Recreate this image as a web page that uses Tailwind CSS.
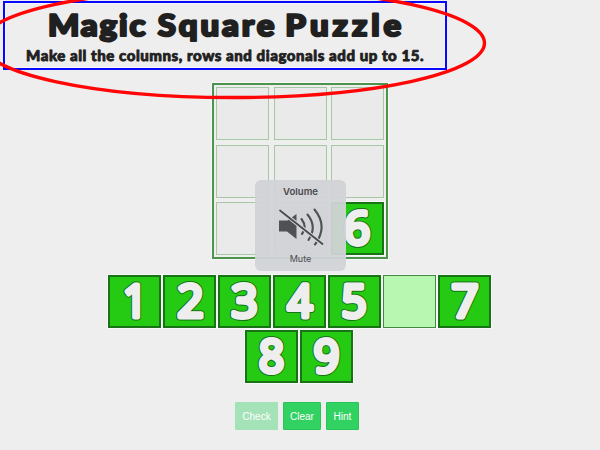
<!DOCTYPE html>
<html lang="en"><head><meta charset="utf-8"><title>Magic Square Puzzle</title>
<script src="https://cdn.jsdelivr.net/npm/@tailwindcss/browser@4"></script></head>
<body class="relative w-[600px] h-[450px] overflow-hidden bg-[#eeeeee] font-['Liberation_Sans',Arial,sans-serif]">
<header class="h-[83px] pt-[1px] pl-[3px]">
<div class="w-[444px] h-[69px] border-[2px] border-[#0808ff] shadow-[inset_0_0_0_1px_#f7f7f7]">
<svg class="block overflow-visible" width="440" height="65" viewBox="5 3 440 65" font-family="Lato, 'Open Sans', sans-serif" fill="#202020" stroke="#202020" stroke-linejoin="round" font-weight="900">
<g font-size="30" stroke-width="2.200" text-rendering="geometricPrecision" transform="scale(1.1 1)">
<text x="43.600" y="36.200" textLength="88.600" lengthAdjust="spacing">Magic</text>
<text x="143.400" y="36.200" textLength="106" lengthAdjust="spacing">Square</text>
<text x="259.300" y="36.200" textLength="105.500" lengthAdjust="spacing">Puzzle</text>
</g>
<text x="26" y="60.800" font-size="15" stroke-width=".8" textLength="397.500" lengthAdjust="spacing" text-rendering="geometricPrecision">Make all the columns, rows and diagonals add up to 15.</text>
</svg>
</div>
</header>
<main class="flex flex-col items-center">
<section class="relative w-[176px] h-[176px] border-2 border-[#4c934c] p-[2px] outline outline-1 outline-white/50" aria-label="Board">
<div class="grid grid-cols-[repeat(3,53px)] grid-rows-[repeat(3,53px)] gap-[4.5px]" id="board"></div>
<div class="absolute left-[41px] top-[95px] z-10 w-[91px] h-[91px] rounded-[6px] bg-[#d2d3d7]/95 text-[#48494d] flex flex-col items-center">
<span class="mt-[5px] text-[9.6px] leading-[14px] font-semibold font-[Inter]">Volume</span>
<svg class="mt-[7px]" width="50" height="42" viewBox="275 206 50 42" fill="none">
<path fill="#505155" d="M278 220.500h8.500l9-6.500v25l-9.500-7.500h-8z"/>
<g stroke="#505155" stroke-width="2.100" stroke-linecap="round"><path d="M300.500 219q6 8 .5 15M306.500 214.500q10 12 1 25.500M313.500 209.500q14 17 .5 35"/></g>
<path stroke="#d3d4d8" stroke-width="4" d="M280 211l40 32"/>
<path stroke="#48494d" stroke-width="1.700" stroke-linecap="round" d="M279 210.500l42.500 33.500"/>
</svg>
<span class="mt-[5px] text-[9px] leading-[12px] font-[Inter]">Mute</span>
</div>
</section>
<section class="mt-[16px] -ml-[1.5px] flex w-[384px] flex-wrap justify-center gap-[2px]" id="tiles" aria-label="Tiles"></section>
<nav class="mt-[19px] -ml-[6px] flex gap-[5px] text-[10px] text-white">
<button class="w-[43px] h-[28px] rounded-[1px] bg-[#a4e2b7]">Check</button>
<button class="w-[38px] h-[28px] rounded-[1px] bg-[#31d162] border border-[#2bc259]">Clear</button>
<button class="w-[33px] h-[28px] rounded-[1px] bg-[#31d162] border border-[#2bc259]">Hint</button>
</nav>
</main>
<svg class="pointer-events-none absolute left-0 top-0 z-20" width="600" height="450" fill="none"><ellipse cx="233" cy="43" rx="251.500" ry="54.500" stroke="#ff0505" stroke-width="3.400"/></svg>
<script>
// Advance width and centre of each digit, in tile pixels.
const advance = {1:24,2:26,3:26,4:25,5:25,6:26,7:26.5,8:25,9:25.5};
const centre = {1:27,2:27.5,3:26.5,4:27,5:26,6:26,7:27,8:26.5,9:26.5};
function tile(n){
  const w=advance[n], x=centre[n]-w/2;
  const text=(attrs)=>`<text x="${x}" y="42" textLength="${w}" lengthAdjust="spacingAndGlyphs" font-family="'Open Sans', sans-serif" font-size="45" font-weight="400" text-rendering="geometricPrecision" stroke-linejoin="round" ${attrs}>${n}</text>`;
  return `<div class="w-[53px] h-[53px] bg-[#24cb12] border-2 border-[#177315] outline outline-1 outline-white/50"><svg class="-m-[2px] block overflow-visible" width="53" height="53">${text('fill="#167316" stroke="#167316" stroke-width="7" aria-hidden="true"')}${text('fill="#eeeeee" stroke="#eeeeee" stroke-width="5"')}</svg></div>`;
}
document.getElementById('board').innerHTML=Array.from({length:9},(_,i)=>i===8?tile(6):'<div class="border border-[#a5c8a5] bg-[#eaeaea]"></div>').join('');
document.getElementById('tiles').innerHTML=[1,2,3,4,5,0,7,8,9].map(n=>n?tile(n):'<div class="w-[53px] h-[53px] bg-[#b8f7b1] border border-[#438843] outline outline-1 outline-white/50"></div>').join('');
</script>
</body></html>
